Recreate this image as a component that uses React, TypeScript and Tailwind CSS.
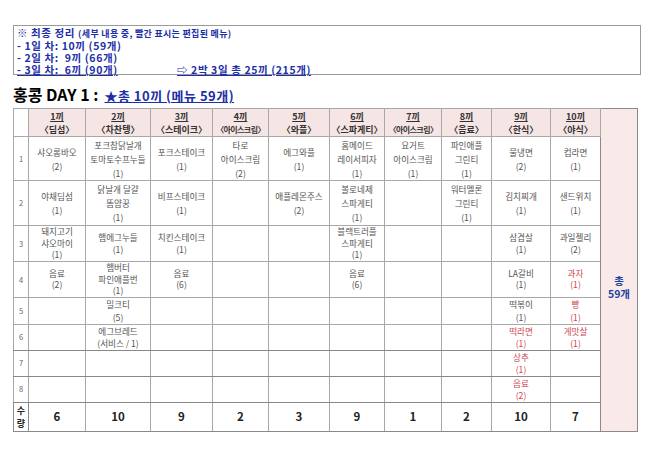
type Cell = { t: string[]; red?: boolean } | null;

const KR = "font-['Noto_Sans_CJK_KR','Noto_Sans',sans-serif]";

const HEADS = [
  ["1끼", "〈딤섬〉"],
  ["2끼", "〈차찬텡〉"],
  ["3끼", "〈스테이크〉"],
  ["4끼", "〈아이스크림〉"],
  ["5끼", "〈와플〉"],
  ["6끼", "〈스파게티〉"],
  ["7끼", "〈아이스크림〉"],
  ["8끼", "〈음료〉"],
  ["9끼", "〈한식〉"],
  ["10끼", "〈야식〉"],
];

const c = (...t: string[]): Cell => ({ t });
const r = (...t: string[]): Cell => ({ t, red: true });

const ROWS: { h: string; lh: string; cells: Cell[] }[] = [
  {
    h: "h-[44px]",
    lh: "leading-[14px]",
    cells: [
      c("샤오롱바오", "(2)"),
      c("포크찹닭날개", "토마토수프누들", "(1)"),
      c("포크스테이크", "(1)"),
      c("타로", "아이스크림", "(2)"),
      c("에그와플", "(1)"),
      c("홈메이드", "레이서피자", "(1)"),
      c("요거트", "아이스크림", "(1)"),
      c("파인애플", "그린티", "(1)"),
      c("물냉면", "(2)"),
      c("컵라면", "(1)"),
    ],
  },
  {
    h: "h-[45px]",
    lh: "leading-[14px]",
    cells: [
      c("야채딤섬", "(1)"),
      c("닭날개 달걀", "똠얌꿍", "(1)"),
      c("비프스테이크", "(1)"),
      null,
      c("애플레몬주스", "(2)"),
      c("볼로네제", "스파게티", "(1)"),
      null,
      c("워터멜론", "그린티", "(1)"),
      c("김치찌개", "(1)"),
      c("샌드위치", "(1)"),
    ],
  },
  {
    h: "h-[36px]",
    lh: "leading-[11.5px]",
    cells: [
      c("돼지고기", "샤오마이", "(1)"),
      c("햄에그누들", "(1)"),
      c("치킨스테이크", "(1)"),
      null,
      null,
      c("블랙트러플", "스파게티", "(1)"),
      null,
      null,
      c("삼겹살", "(1)"),
      c("과일젤리", "(2)"),
    ],
  },
  {
    h: "h-[34px]",
    lh: "leading-[11.5px]",
    cells: [
      c("음료", "(2)"),
      c("햄버터", "파인애플번", "(1)"),
      c("음료", "(6)"),
      null,
      null,
      c("음료", "(6)"),
      null,
      null,
      c("LA갈비", "(1)"),
      r("과자", "(1)"),
    ],
  },
  {
    h: "h-[26px]",
    lh: "leading-[13px]",
    cells: [null, c("밀크티", "(5)"), null, null, null, null, null, null, c("떡볶이", "(1)"), r("빵", "(1)")],
  },
  {
    h: "h-[26px]",
    lh: "leading-[12.5px]",
    cells: [null, c("에그브레드", "(서비스 / 1)"), null, null, null, null, null, null, r("떡라면", "(1)"), r("게맛살", "(1)")],
  },
  {
    h: "h-[25px]",
    lh: "leading-[12.5px]",
    cells: [null, null, null, null, null, null, null, null, r("상추", "(1)"), null],
  },
  {
    h: "h-[25px]",
    lh: "leading-[12.5px]",
    cells: [null, null, null, null, null, null, null, null, r("음료", "(2)"), null],
  },
];

const TOTALS = [6, 10, 9, 2, 3, 9, 1, 2, 10, 7];

export default function App() {
  return (
    <div className={`min-h-screen w-[650px] bg-white pl-[13px] pt-[25px] ${KR}`}>
      {/* summary box */}
      <div className="h-[50px] w-[628px] border border-[#9a9a9a] px-[3px] pt-[1px] text-[10.5px] font-bold leading-[12px] tracking-[0.6px] text-[#1c2fa6]">
        <div>
          ※ 최종 정리 <span className="text-[9px] tracking-[0.3px]">(세부 내용 중, 빨간 표시는 편집된 메뉴)</span>
        </div>
        <div>- 1일 차: 10끼 (59개)</div>
        <div>- 2일 차: &nbsp;9끼 (66개)</div>
        <div className="flex">
          <span className="w-[160px] underline">- 3일 차: &nbsp;6끼 (90개)</span>
          <span className="underline">⇨ 2박 3일 총 25끼 (215개)</span>
        </div>
      </div>

      {/* title */}
      <div className="mt-[11px] flex items-end gap-[6px] leading-none">
        <span className="text-[16px] font-bold text-black">홍콩 DAY 1 :</span>
        <span className="text-[13px] font-bold tracking-[0.5px] text-[#1c2fa6] underline">★총 10끼 (메뉴 59개)</span>
      </div>

      {/* table */}
      <table className="mt-[6px] table-fixed border-collapse border border-[#8a8a8a] text-center">
        <colgroup>
          <col className="w-[15px]" />
          <col className="w-[57px]" />
          <col className="w-[65px]" />
          <col className="w-[62px]" />
          <col className="w-[56px]" />
          <col className="w-[61px]" />
          <col className="w-[55px]" />
          <col className="w-[57px]" />
          <col className="w-[50px]" />
          <col className="w-[59px]" />
          <col className="w-[50px]" />
          <col className="w-[37px]" />
        </colgroup>
        <tbody>
          <tr className="h-[28px]">
            <td className="border border-[#a8a8a8] bg-white p-0" />
            {HEADS.map(([n, label]) => (
              <td
                key={n}
                className="border border-[#a8a8a8] bg-[#f6e5e5] p-0 text-[9px] font-bold leading-[13px] text-[#333]"
              >
                <div className="underline">{n}</div>
                <div className={label.length > 6 ? "whitespace-nowrap text-[8px] tracking-[-0.6px]" : "whitespace-nowrap"}>
                  {label}
                </div>
              </td>
            ))}
            <td rowSpan={11} className="border border-[#8a8a8a] bg-[#f9e9e9] p-0 pt-[34px] align-middle">
              <div className="text-[10.5px] font-bold leading-[13px] text-[#1c3fa0]">
                <div>총</div>
                <div>59개</div>
              </div>
            </td>
          </tr>
          {ROWS.map((row, ri) => (
            <tr key={ri} className={row.h}>
              <td
                className={`border border-[#a8a8a8] p-0 text-[7.5px] text-[#666] ${
                  ri >= 5 ? "border-b-[#888]" : ""
                }`}
              >
                {ri + 1}
              </td>
              {row.cells.map((cell, ci) => (
                <td
                  key={ci}
                  className={`overflow-visible whitespace-nowrap border border-[#a8a8a8] p-0 align-middle text-[8.6px] ${row.lh} ${
                    ri >= 5 ? "border-b-[#888]" : ""
                  } ${ci === 8 ? "border-l-[#888]" : ""} ${
                    cell?.red ? "text-[#d0464f]" : "text-[#555]"
                  }`}
                >
                  {cell?.t.map((line, li) => (
                    <div key={li}>{line}</div>
                  ))}
                </td>
              ))}
            </tr>
          ))}
          <tr className="h-[29px]">
            <td className="border border-[#8a8a8a] p-0 text-[9px] font-bold leading-[13px] text-[#222]">
              <div>수</div>
              <div>량</div>
            </td>
            {TOTALS.map((n, i) => (
              <td
                key={i}
                className={`border border-[#a8a8a8] border-b-[#8a8a8a] p-0 text-[11.5px] font-bold text-[#222] ${
                  i === 8 ? "border-l-[#888]" : ""
                }`}
              >
                {n}
              </td>
            ))}
          </tr>
        </tbody>
      </table>
    </div>
  );
}
